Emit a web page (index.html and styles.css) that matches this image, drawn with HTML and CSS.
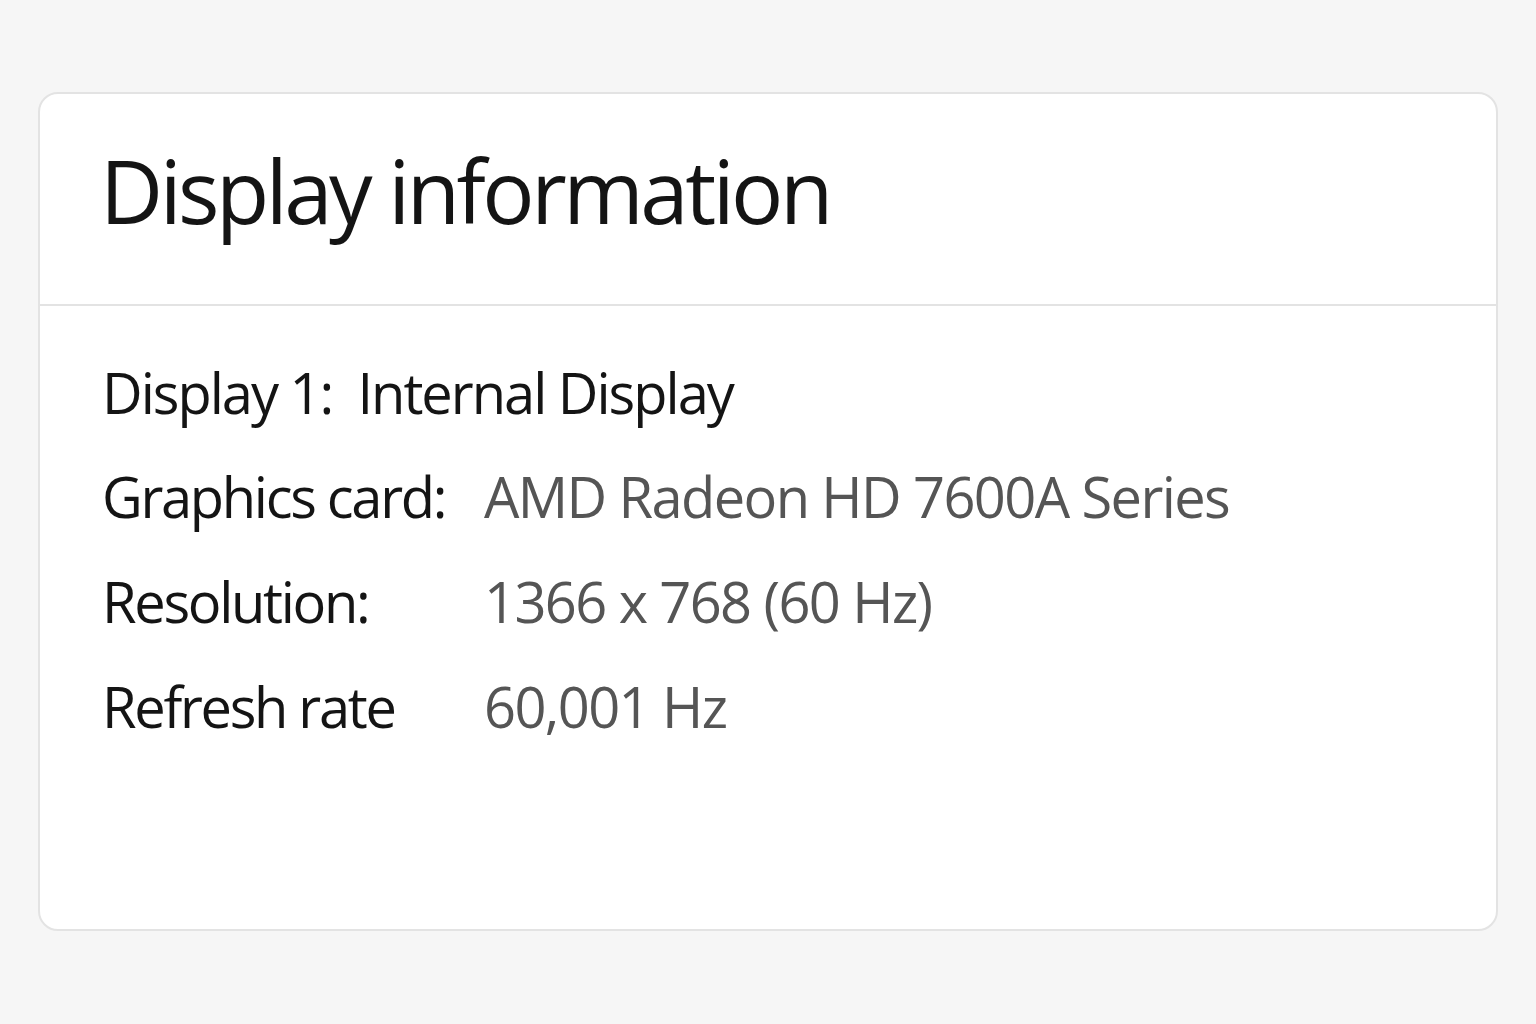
FILE: index.html
```html
<!DOCTYPE html>
<html lang="en">
<head>
<meta charset="utf-8">
<title>Display information</title>
<link rel="stylesheet" href="styles.css">
</head>
<body>
<main class="page">
  <section class="card">
    <header class="card-header">
      <h1 class="title">Display information</h1>
    </header>
    <div class="card-body">
      <p class="display-name">Display 1:&nbsp; Internal Display</p>
      <dl class="info">
        <dt>Graphics card:</dt><dd>AMD Radeon HD 7600A Series</dd>
        <dt>Resolution:</dt><dd>1366 x 768 (60 Hz)</dd>
        <dt>Refresh rate</dt><dd>60,001 Hz</dd>
      </dl>
    </div>
  </section>
</main>
</body>
</html>
```
FILE: styles.css
```css
html, body {
  margin: 0;
  padding: 0;
  background: #f6f6f6;
}
body {
  font-family: "Open Sans", "Noto Sans", sans-serif;
  color: #141414;
}
.page {
  padding: 92px 40px 0 38px;
}
.card {
  width: 1460px;
  height: 839px;
  box-sizing: border-box;
  background: #ffffff;
  border: 2px solid #e3e3e3;
  border-radius: 20px;
  display: flex;
  flex-direction: column;
}
.card-header {
  height: 210px;
  border-bottom: 2px solid #e3e3e3;
  display: flex;
  align-items: flex-start;
  padding-left: 60px;
}
.title {
  margin: 0;
  font-weight: 400;
  font-size: 87px;
  line-height: 1;
  padding-top: 53px;
  letter-spacing: -3.5px;
}
.card-body {
  padding: 58px 0 0 62px;
}
.display-name {
  margin: 0;
  font-size: 56px;
  line-height: 1;
  letter-spacing: -2px;
}
.info {
  margin: 48px 0 0;
  display: grid;
  grid-template-columns: 382px auto;
  row-gap: 49px;
  font-size: 56px;
  line-height: 1;
}
.info dt {
  margin: 0;
  letter-spacing: -2.3px;
}
.info dd {
  margin: 0;
  color: #555555;
  letter-spacing: -1.6px;
}
```
